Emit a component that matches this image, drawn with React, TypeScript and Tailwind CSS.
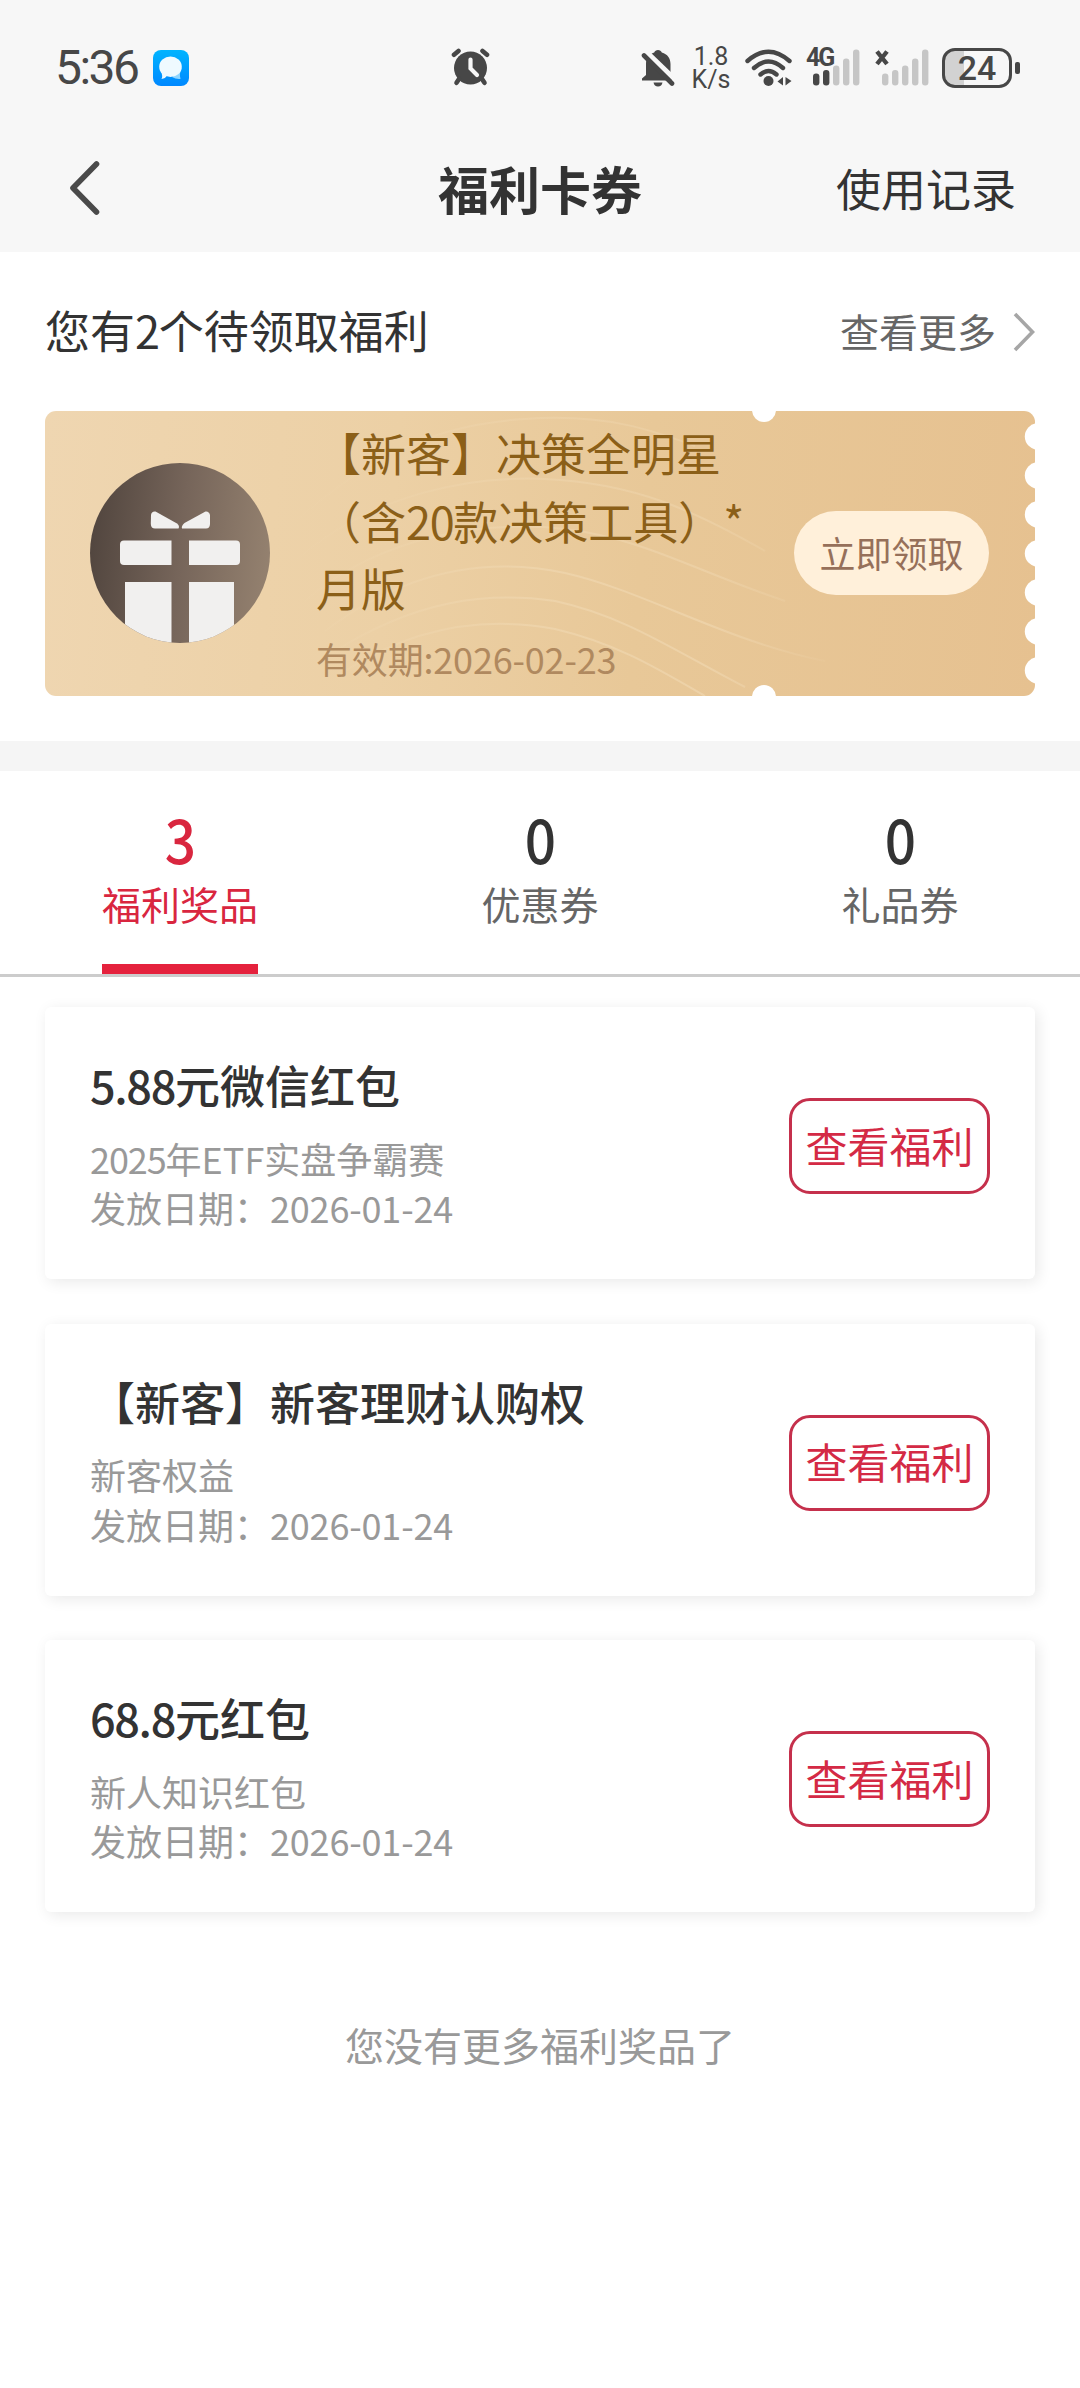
import type { ReactNode } from 'react'

type Premio = {
  titulo: string
  origen: string
  fecha: string
}

const premios: Premio[] = [
  { titulo: '5.88元微信红包', origen: '2025年ETF实盘争霸赛', fecha: '2026-01-24' },
  { titulo: '【新客】新客理财认购权', origen: '新客权益', fecha: '2026-01-24' },
  { titulo: '68.8元红包', origen: '新人知识红包', fecha: '2026-01-24' },
]

const pestanas = [
  { total: 3, nombre: '福利奖品' },
  { total: 0, nombre: '优惠券' },
  { total: 0, nombre: '礼品券' },
]

const muescas = [25.5, 64.5, 103.5, 142.5, 181.5, 220.5, 259.5]

// Los números van un poco más apretados que el texto chino
function Cifras({ texto }: { texto: string }) {
  return texto.split(/([\d.]+)/).map((parte, i) =>
    i % 2 ? (
      <span key={i} className="tracking-[-0.030em]">
        {parte}
      </span>
    ) : (
      parte
    ),
  )
}

function Senal({ activas }: { activas: number }) {
  const barras = [12, 15.5, 20, 27, 36]
  return (
    <svg className="h-[37px] w-[47px]" viewBox="0 0 47 37">
      {barras.map((alto, i) => (
        <rect
          key={alto}
          x={i * 10}
          y={36.5 - alto}
          width="6.4"
          height={alto}
          rx="3"
          fill={i < activas ? '#474747' : '#c6c6c6'}
        />
      ))}
    </svg>
  )
}

function BarraEstado() {
  return (
    <div className="relative flex h-[135px] items-center pl-[55px] pr-[60px] text-[#474747]">
      <div className="flex flex-1 items-center">
        <span className="w-[98px] font-[Roboto] text-[48px] leading-[48px] tracking-[-2.5px]">5:36</span>
        <svg className="h-9 w-9" viewBox="0 0 36 36">
          <defs>
            <linearGradient id="chat" x1="0" y1="0" x2="0" y2="1">
              <stop offset="0" stopColor="#00b4ff" />
              <stop offset="1" stopColor="#0088ff" />
            </linearGradient>
          </defs>
          <rect width="36" height="36" rx="8" fill="url(#chat)" />
          <path d="M19 27 L28.500 18 Q26 24 27.500 29 Q23 29.500 19 27 Z" fill="#8fd6ff" />
          <ellipse cx="17.500" cy="16.800" rx="11.300" ry="10.200" fill="#effaff" />
          <path d="M8 21 Q10 26 8.500 29 Q12.500 28.500 14 25.500 Z" fill="#effaff" />
        </svg>
      </div>

      <svg className="absolute left-[451px] top-12 h-[38px] w-[39px]" viewBox="0 0 39 38">
        <circle cx="19.500" cy="20" r="16.500" fill="#474747" />
        <g stroke="#474747" strokeWidth="4.600" strokeLinecap="round" fill="none">
          <path d="M3 6.800 L7.500 3" />
          <path d="M36 6.800 L31.500 3" />
          <path d="M8 31 L5.500 34.800" />
          <path d="M31 31 L33.500 34.800" />
        </g>
        <path d="M19.500 11.500 V20.500 L26 27" stroke="#f7f7f7" strokeWidth="4.200" strokeLinecap="round" fill="none" />
      </svg>

      <div className="flex items-center">
        <svg className="h-[38px] w-[34px]" viewBox="0 0 34 38">
          <path
            d="M17 1 C18.800 1 20.200 2 20.800 3.500 C26.500 5 29.500 9.500 29.500 15 V24 L31 31 V31.500 H1 V29.500 L5 26 V15 C5 9.500 8 5 13.200 3.500 C13.800 2 15.200 1 17 1 Z"
            fill="#474747"
          />
          <path d="M12.500 33.500 H21.500 C21 36 19.500 37.500 17 37.500 C14.500 37.500 13 36 12.500 33.500 Z" fill="#474747" />
          <path d="M4.500 2 L35 31.500" stroke="#f7f7f7" strokeWidth="5" />
          <path d="M3 6.500 L31 34.500" stroke="#474747" strokeWidth="4.600" strokeLinecap="round" />
        </svg>
        <div className="ml-4 w-[40px] text-center font-[Roboto] text-[25px] leading-[23px]">
          <div>1.8</div>
          <div>K/s</div>
        </div>
        <svg className="ml-[14px] h-[38px] w-[48px]" viewBox="0 0 48 38">
          <g stroke="#474747" strokeWidth="4.400" strokeLinecap="round" fill="none">
            <path d="M2.500 12 Q23.500 -6.500 44.500 12" />
            <path d="M9 19 Q23.500 6 38 19" />
            <path d="M15.500 25.500 Q23.500 18.500 31.500 25.500" />
          </g>
          <circle cx="23.500" cy="32" r="5" fill="#474747" />
          <path d="M38 28 V36.500 L32.500 32.500 Z" fill="#474747" />
          <path d="M40.500 28 V36.500 L46.500 32 Z" fill="#474747" />
        </svg>
        <div className="relative ml-[20px]">
          <Senal activas={2} />
          <span className="absolute -left-[7px] -top-[1px] font-[Roboto] text-[25px] font-bold leading-[20px] tracking-[-2px]">
            4G
          </span>
        </div>
        <div className="relative ml-[22px]">
          <Senal activas={0} />
          <svg className="absolute -left-[8px] top-0 h-[18px] w-[16px]" viewBox="0 0 16 18">
            <path d="M3 2.500 L13 15 M13 2.500 L3 15" stroke="#474747" strokeWidth="4.400" />
          </svg>
        </div>
        <div className="relative ml-[13px] flex h-[40px] w-[70px] items-center justify-center overflow-hidden rounded-[13px] border-[3px] border-[#474747] bg-[linear-gradient(to_right,#d2d2d2_19px,#f7f7f7_19px)]">
          <span className="font-[Roboto] text-[34px] font-medium leading-[34px]">24</span>
        </div>
        <div className="ml-[3px] h-3 w-[5px] rounded-[2px] bg-[#474747]" />
      </div>
    </div>
  )
}

function Cabecera() {
  return (
    <div className="relative flex h-[117px] items-center justify-between pb-[12px] pl-[68px] pr-[64px] text-[#333]">
      <svg className="h-[56px] w-[34px]" viewBox="0 0 34 56" fill="none">
        <path d="M28.500 4 L5 28 L28.500 52" stroke="#4a4a4a" strokeWidth="5.600" strokeLinecap="round" strokeLinejoin="round" />
      </svg>
      <h1 className="absolute inset-x-0 text-center text-[51px] font-bold leading-[60px]">福利卡券</h1>
      <span className="relative text-[45px] leading-[60px]">使用记录</span>
    </div>
  )
}

function Cupon() {
  return (
    <div className="relative mx-[45px] flex h-[285px] overflow-hidden rounded-[11px] bg-[linear-gradient(95deg,#efd6b1_0%,#ecd0a5_35%,#e8c898_60%,#e6c190_100%)] pl-[45px] pr-[45px]">
      <svg className="absolute inset-0 h-[285px] w-[990px]" viewBox="0 0 990 285" fill="none">
        <defs>
          <linearGradient id="ondas" gradientUnits="userSpaceOnUse" x1="240" y1="0" x2="800" y2="0">
            <stop offset="0" stopColor="#f4dfbc" stopOpacity="0" />
            <stop offset="0.45" stopColor="#f4dfbc" stopOpacity="0.4" />
            <stop offset="0.75" stopColor="#f4dfbc" stopOpacity="0.45" />
            <stop offset="1" stopColor="#f4dfbc" stopOpacity="0" />
          </linearGradient>
        </defs>
        <g stroke="url(#ondas)" strokeWidth="2">
          <path d="M250 110 C300 70 360 15 480 8 C560 2 610 20 650 35" opacity="0.6" />
          <path d="M250 150 C330 80 430 65 500 68 C590 72 650 100 720 140" opacity="0.7" />
          <path d="M260 190 C340 120 450 110 520 118 C600 128 650 160 740 190" opacity="0.8" />
          <path d="M280 220 C360 160 440 145 520 162 C600 180 680 230 780 250" />
          <path d="M290 240 C370 190 440 180 510 190 C580 205 630 240 700 276" />
          <path d="M300 260 C370 215 440 205 510 218 C570 232 610 256 660 285" />
        </g>
      </svg>
      <svg className="relative mt-[52px] h-[180px] w-[180px] shrink-0" viewBox="0 0 180 180">
        <defs>
          <linearGradient id="disco" x1="0" y1="0.45" x2="1" y2="0.55">
            <stop offset="0" stopColor="#52463f" />
            <stop offset="0.5" stopColor="#76655a" />
            <stop offset="1" stopColor="#94816f" />
          </linearGradient>
          <clipPath id="circulo">
            <circle cx="90" cy="90" r="90" />
          </clipPath>
        </defs>
        <g clipPath="url(#circulo)">
          <rect width="180" height="180" fill="url(#disco)" />
          <g fill="#f1f0ef">
            <path d="M61 52 Q61.500 48 65.500 48.500 L87 60.500 Q90 63 88.500 65.500 H65 Q61 65.500 60.800 61 Z" />
            <path d="M120 52 Q119 48 115.500 48.500 L94.500 60 Q91 63 92 65.500 H116 Q119.800 65.500 120 61 Z" />
            <path d="M34 77.500 H81.500 V102 H34 Q30 102 30 98 V81.500 Q30 77.500 34 77.500 Z" />
            <path d="M99 77.500 H146 Q150 77.500 150 81.500 V98 Q150 102 146 102 H99 Z" />
            <path d="M35 119 H81.500 V180 H35 Z" />
            <path d="M99 119 H144 V180 H99 Z" />
          </g>
        </g>
      </svg>
      <div className="relative ml-[46px] mt-[8px] w-[432px] shrink-0 whitespace-nowrap">
        <div className="text-[45px] leading-[67.500px] text-[#8b5f18]">
          【新客】决策全明星
          <br />
          <Cifras texto="（含20款决策工具）" />*
          <br />
          月版
        </div>
        <div className="mt-[9px] text-[36px] leading-[54px] tracking-[-0.005em] text-[#b0895f]">有效期:2026-02-23</div>
      </div>
      <button className="relative ml-[46px] mt-[100px] h-[84px] w-[195px] shrink-0 rounded-full bg-[#fff0da] pb-[3px] text-[36px] leading-[54px] text-[#96705a]">
        立即领取
      </button>
      <span className="absolute left-[707px] -top-[13px] h-6 w-6 rounded-full bg-white" />
      <span className="absolute left-[707px] -bottom-[13px] h-6 w-6 rounded-full bg-white" />
      <svg className="absolute right-0 top-0 h-[285px] w-[12px]" viewBox="0 0 12 285" fill="#fff">
        {muescas.map((y) => (
          <circle key={y} cx="15" cy={y} r="13.200" />
        ))}
      </svg>
    </div>
  )
}

function Pendientes() {
  return (
    <section className="bg-white">
      <div className="flex h-[159px] items-center justify-between px-[45px]">
        <span className="pb-[3px] text-[45px] leading-[60px] text-[#333]">
          <Cifras texto="您有2个待领取福利" />
        </span>
        <span className="flex items-center text-[39px] text-[#666]">
          <span className="pb-[3px] leading-[60px]">查看更多</span>
          <svg className="ml-[17px] h-10 w-[22px]" viewBox="0 0 22 40" fill="none">
            <path d="M2 2 L19.500 20 L2 38" stroke="#a6a6a6" strokeWidth="3.600" />
          </svg>
        </span>
      </div>
      <Cupon />
      <div className="mt-[45px] h-[30px] bg-[#f5f5f5]" />
    </section>
  )
}

function Pestanas() {
  return (
    <div className="grid h-[206px] grid-cols-3 border-b-[3px] border-[#ccc] bg-white">
      {pestanas.map((p, i) => (
        <div key={p.nombre} className={`flex flex-col items-center ${i === 0 ? 'text-[#d9263f]' : 'text-[#333]'}`}>
          <div className="mt-[34px] scale-x-90 text-[61px] font-medium leading-[66px]">{p.total}</div>
          <div className={`mt-[3px] text-[39px] leading-[58px] ${i === 0 ? '' : 'text-[#666]'}`}>{p.nombre}</div>
          {i === 0 && <div className="mt-auto h-[10px] w-[156px] bg-[#e5223d]" />}
        </div>
      ))}
    </div>
  )
}

function Tarjeta({ children }: { children: ReactNode }) {
  return (
    <div className="flex h-[272px] justify-between rounded-[6px] bg-white px-[45px] pt-[44px] shadow-[3px_3px_15px_rgba(0,0,0,0.09)]">
      {children}
    </div>
  )
}

export default function App() {
  return (
    <div className="h-[2388px] w-[1080px] overflow-hidden bg-white font-['Noto_Sans_CJK_SC',sans-serif] [text-spacing-trim:space-all]">
      <header className="bg-[#f7f7f7]">
        <BarraEstado />
        <Cabecera />
      </header>
      <Pendientes />
      <Pestanas />
      <div className="mt-[30px] flex flex-col gap-[44.500px] px-[45px]">
        {premios.map((p) => (
          <Tarjeta key={p.titulo}>
            <div>
              <div className="text-[45px] font-medium leading-[67.500px] text-[#333]">
                <Cifras texto={p.titulo} />
              </div>
              <div className="mt-[15px] text-[36px] leading-[49.500px] text-[#999]">
                <div>
                  <Cifras texto={p.origen} />
                </div>
                <div>
                  发放日期：<span className="tracking-[-0.005em]">{p.fecha}</span>
                </div>
              </div>
            </div>
            <button className="mt-[47px] h-24 w-[201px] rounded-[21px] border-[3px] border-[#c5304c] pb-[3px] text-[42px] leading-[60px] text-[#d42a45]">
              查看福利
            </button>
          </Tarjeta>
        ))}
      </div>
      <p className="mt-[103px] text-center text-[39px] leading-[58px] text-[#999]">您没有更多福利奖品了</p>
    </div>
  )
}
